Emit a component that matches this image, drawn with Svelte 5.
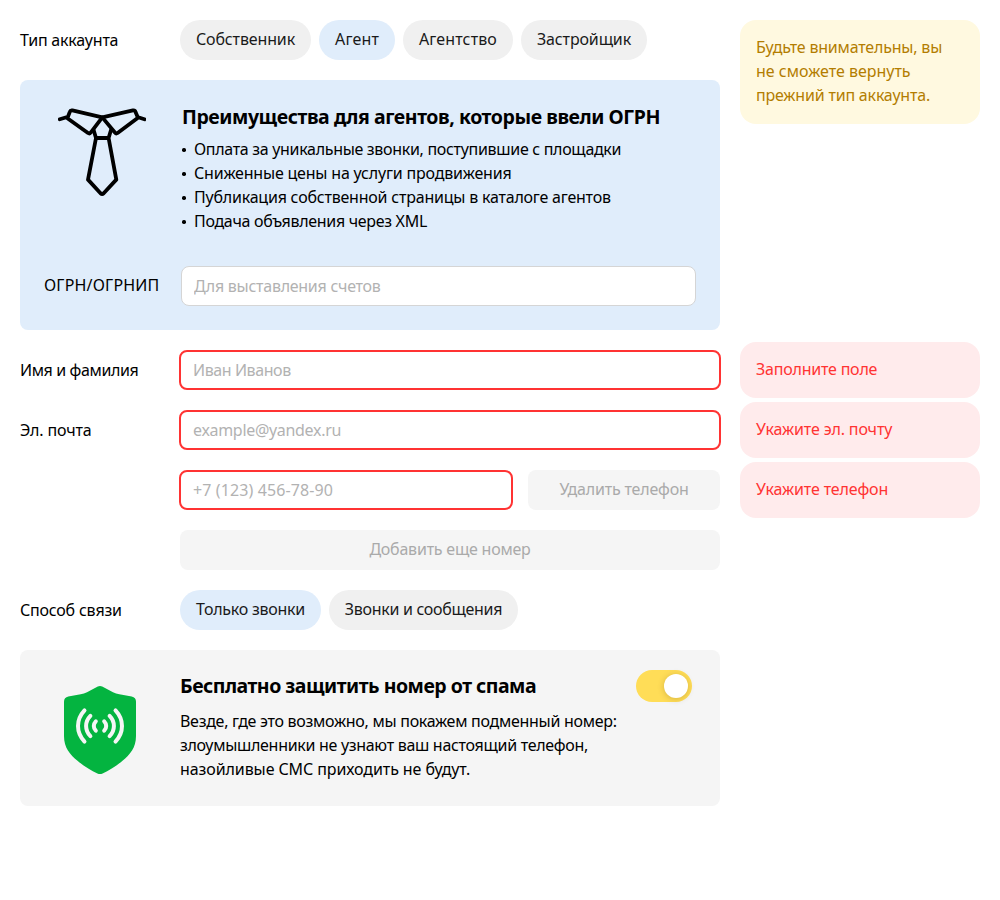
<script>
  const accountTypes = [
    { label: 'Собственник', tone: 'w99' },
    { label: 'Агент', tone: 'w44', active: true },
    { label: 'Агентство', tone: 'w78' },
    { label: 'Застройщик', tone: 'w94' }
  ];
  const contactWays = [
    { label: 'Только звонки', tone: 'w109', active: true },
    { label: 'Звонки и сообщения', tone: 'w157' }
  ];
  const benefits = [
    { text: 'Оплата за уникальные звонки, поступившие с площадки', tone: 't31' },
    { text: 'Сниженные цены на услуги продвижения', tone: 't19' },
    { text: 'Публикация собственной страницы в каталоге агентов', tone: 't22' },
    { text: 'Подача объявления через XML', tone: 't31' }
  ];
</script>

{#snippet pills(items)}
  <div class="pills">
    {#each items as item}
      <button type="button" class="pill {item.tone}" class:active={item.active}>{item.label}</button>
    {/each}
  </div>
{/snippet}

<form class="page">
  <div class="row">
    <div class="field">
      <span class="label t22">Тип аккаунта</span>
      {@render pills(accountTypes)}
    </div>
    <aside class="note warning"><span class="t19">Будьте внимательны, вы</span><br />не сможете вернуть<br /><span class="t19">прежний тип аккаунта.</span></aside>
  </div>

  <section class="panel blue">
    <div class="promo">
      <svg class="tie" viewBox="0 0 88 88" fill="none" stroke="#000" stroke-width="3.8" stroke-linecap="round" stroke-linejoin="round">
        <path d="M44.3 9.4 14.4 2.4q-2-.4-2.6 1.4L9.4 10.2 30 25q1.5 1 2.7-.4ZM9.2 9 1.8 11.3" />
        <path d="M44.3 9.4 74.9 2.4q2-.4 2.5 1.4L80 9.8 59.6 25q-1.5 1-2.7-.4ZM79.5 9 86.4 11.3" />
        <path d="M35.6 22 38 30H50.6L53 22M38 30 30 71.6 42.5 85.2q1.6 1.4 3.2 0L58.3 71.6 50.6 30" />
      </svg>
      <div>
        <h2 class="h-benefits">Преимущества для агентов, которые ввели ОГРН</h2>
        <ul>
          {#each benefits as b}
            <li class={b.tone}>{b.text}</li>
          {/each}
        </ul>
      </div>
    </div>
    <div class="ogrn">
      <label for="ogrn">ОГРН/ОГРНИП</label>
      <input id="ogrn" class="t25" placeholder="Для выставления счетов" />
    </div>
  </section>

  <div class="row">
    <div class="field">
      <label class="label t38" for="name">Имя и фамилия</label>
      <input id="name" class="error t42" placeholder="Иван Иванов" />
    </div>
    <aside class="note alert t22">Заполните поле</aside>
  </div>

  <div class="row">
    <div class="field">
      <label class="label t16" for="email">Эл. почта</label>
      <input id="email" class="error t31" placeholder="example@yandex.ru" />
    </div>
    <aside class="note alert t16">Укажите эл. почту</aside>
  </div>

  <div class="row">
    <div class="field">
      <span class="label"></span>
      <input class="error phone" placeholder="+7 (123) 456-78-90" aria-label="Телефон" />
      <button type="button" class="ghost remove">Удалить телефон</button>
    </div>
    <aside class="note alert t16">Укажите телефон</aside>
  </div>

  <div class="row">
    <div class="field">
      <span class="label"></span>
      <button type="button" class="ghost add">Добавить еще номер</button>
    </div>
  </div>

  <div class="row">
    <div class="field">
      <span class="label t22">Способ связи</span>
      {@render pills(contactWays)}
    </div>
  </div>

  <section class="panel grey">
    <svg class="shield" viewBox="0 0 72 88" fill="none">
      <path fill="#04b440" d="M33.8.6q2.2-1.2 4.4 0L49 6.2Q52 7.7 55.3 8.3L67.7 10.6Q72 11.4 72 15.8V50C72 62 66 68.5 58.5 74.8 52 80.1 45 84.6 38.6 87.5Q36 88.5 33.4 87.5C27 84.6 20 80.1 13.5 74.8 6 68.5 0 62 0 50V15.8Q0 11.4 4.3 10.6L16.7 8.3Q20 7.7 23 6.2Z" />
      <g stroke="#f5f5f5" stroke-width="4" stroke-linecap="round">
        <path d="M20.5 24.4Q14 31.4 14 40t6.5 15.6M26.4 29.9Q22.1 34.2 22.1 40t4.3 10.1M31.8 35.3Q29.8 37.4 29.8 40t2 4.7" />
        <path d="M51.5 24.4Q58 31.4 58 40t-6.5 15.6M45.6 29.9Q49.9 34.2 49.9 40t-4.3 10.1M40.2 35.3Q42.2 37.4 42.2 40t-2 4.7" />
      </g>
    </svg>
    <div class="protect">
      <h2 class="h-protect">Бесплатно защитить номер от спама</h2>
      <p class="t28">Везде, где это возможно, мы покажем подменный номер:</p>
      <p class="t30">злоумышленники не узнают ваш настоящий телефон,</p>
      <p class="t09">назойливые СМС приходить не будут.</p>
    </div>
    <button type="button" class="switch" role="switch" aria-checked="true" aria-label="Защита номера"><span></span></button>
  </section>
</form>

<style>
  :global(body) { background: #fff; }
  .page {
    box-sizing: border-box;
    width: 1000px;
    padding: 20px;
    display: flex;
    flex-direction: column;
    gap: 20px;
    color: #000;
    font: 16px/24px "Noto Sans", sans-serif;
  }
  .row { display: grid; grid-template-columns: 700px 240px; gap: 20px; height: 40px; }
  .field { display: flex; align-items: center; height: 40px; }
  .label { flex: 0 0 160px; }
  button, input { box-sizing: border-box; margin: 0; font: inherit; }
  button { border: 0; padding: 0; text-align: center; white-space: nowrap; }

  .pills { display: flex; gap: 8px; }
  .pill { height: 40px; padding: 0 0 2px; border-radius: 20px; background: #f0f0f0; color: #1a1a1a; }
  .pill.active { background: #e0edfb; }
  .w99 { width: 131px; letter-spacing: -0.14px; }
  .w44 { width: 76px; letter-spacing: 0.17px; }
  .w78 { width: 110px; letter-spacing: 0.13px; }
  .w94 { width: 126px; letter-spacing: -0.14px; }
  .w109 { width: 141px; letter-spacing: -0.25px; }
  .w157 { width: 189px; letter-spacing: -0.3px; }

  .note { padding: 15px 16px 17px; border-radius: 16px; white-space: nowrap; }
  .warning { height: 72px; background: #fff9e0; color: #b37d00; }
  .alert { height: 24px; margin-top: -8px; background: #ffebec; color: #ff3333; }

  .panel { box-sizing: border-box; width: 700px; border-radius: 8px; }
  .blue { height: 250px; padding: 24px; background: #e0edfb; }
  .promo { display: flex; height: 162px; }
  .tie { width: 88px; height: 88px; margin: 4px 36px 0 14px; flex: none; }
  h2 { margin: 0; font-size: 19.5px; font-weight: 700; line-height: 24px; white-space: nowrap; }
  .h-benefits { letter-spacing: -0.44px; padding-top: 1px; }
  .h-protect { letter-spacing: -0.5px; }
  ul { margin: 8px 0 0; padding: 0; list-style: none; }
  li { display: flex; align-items: center; height: 24px; white-space: nowrap; }
  li::before { content: ""; width: 3.4px; height: 3.4px; margin: 2px 8.3px 0 0.3px; border-radius: 50%; background: #000; }
  .ogrn { display: flex; align-items: center; }
  .ogrn label { width: 137px; letter-spacing: 0.18px; padding-bottom: 2px; }
  .ogrn input { width: 515px; flex: none; }

  input {
    height: 40px;
    padding: 0 12px;
    border: 1px solid #d5d5d5;
    border-radius: 8px;
    background: #fff;
    color: #000;
    outline: none;
  }
  input::placeholder { color: #b2b2b2; opacity: 1; }
  input.error { width: 542px; flex: none; margin: 0 -1px; border: 2px solid #ff3333; }
  input.phone { width: 334px; margin-right: 15px; letter-spacing: 0.11px; }
  .ghost { height: 40px; padding-bottom: 2px; border-radius: 8px; background: #f5f5f5; color: #aaa; }
  .remove { width: 192px; letter-spacing: -0.18px; }
  .add { width: 540px; letter-spacing: -0.22px; }

  .grey { display: flex; height: 156px; padding: 20px 28px 0 44px; background: #f5f5f5; }
  .shield { width: 72px; height: 88px; margin: 16px 44px 0 0; flex: none; }
  .protect { flex: 1; padding-top: 4px; white-space: nowrap; }
  .protect h2 { margin-bottom: 11px; }
  p { margin: 0; }
  .switch { width: 56px; height: 32px; padding: 4px; border-radius: 16px; background: #ffdd57; display: flex; justify-content: flex-end; }
  .switch span { width: 24px; height: 24px; border-radius: 50%; background: #fff; box-shadow: 0 1px 6px rgba(90, 60, 0, 0.25); }

  .t09 { letter-spacing: -0.09px; }
  .t16 { letter-spacing: -0.14px; }
  .t19 { letter-spacing: -0.19px; }
  .t22 { letter-spacing: -0.21px; }
  .t25 { letter-spacing: -0.27px; }
  .t28 { letter-spacing: -0.28px; }
  .t30 { letter-spacing: -0.3px; }
  .t31 { letter-spacing: -0.31px; }
  .t38 { letter-spacing: -0.38px; }
  .t42 { letter-spacing: -0.42px; }
</style>
